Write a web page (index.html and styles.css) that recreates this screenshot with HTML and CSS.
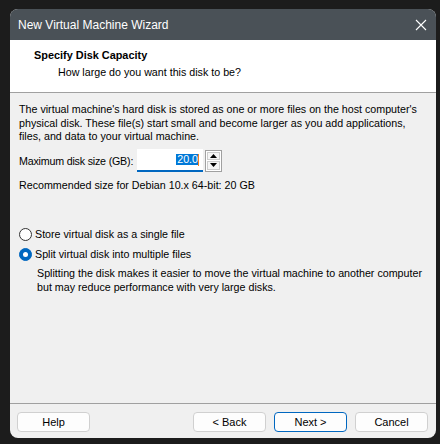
FILE: index.html
```html
<!DOCTYPE html>
<html>
<head>
<meta charset="utf-8">
<link rel="stylesheet" href="styles.css">
</head>
<body>
<div class="window">
  <div class="titlebar">
    <span class="title">New Virtual Machine Wizard</span>
    <svg class="close" width="12" height="12" viewBox="0 0 12 12"><path d="M1 1L11 11M11 1L1 11" stroke="#ffffff" stroke-width="1.1" fill="none"/></svg>
  </div>
  <div class="header">
    <div class="h-title">Specify Disk Capacity</div>
    <div class="h-sub">How large do you want this disk to be?</div>
  </div>
  <div class="content">
    <p class="desc">The virtual machine's hard disk is stored as one or more files on the host computer's<br>physical disk. These file(s) start small and become larger as you add applications,<br>files, and data to your virtual machine.</p>
    <div class="size-row">
      <span class="label">Maximum disk size (GB):</span>
      <div class="input"><span class="sel">20.0</span><span class="caret"></span></div>
      <div class="spin">
        <div class="spin-btn"><svg width="7" height="4" viewBox="0 0 7 4"><path d="M0 4L3.5 0L7 4Z" fill="#000"/></svg></div>
        <div class="spin-btn"><svg width="7" height="4" viewBox="0 0 7 4"><path d="M0 0L3.5 4L7 0Z" fill="#000"/></svg></div>
      </div>
    </div>
    <div class="rec">Recommended size for Debian 10.x 64-bit: 20 GB</div>
    <div class="radios">
      <div class="radio-row"><span class="radio"></span><span>Store virtual disk as a single file</span></div>
      <div class="radio-row"><span class="radio checked"></span><span>Split virtual disk into multiple files</span></div>
      <p class="radio-desc">Splitting the disk makes it easier to move the virtual machine to another computer<br>but may reduce performance with very large disks.</p>
    </div>
  </div>
  <div class="footer">
    <button class="btn">Help</button>
    <div class="spacer"></div>
    <button class="btn">&lt; Back</button>
    <button class="btn primary">Next &gt;</button>
    <button class="btn">Cancel</button>
  </div>
</div>
</body>
</html>
```
FILE: styles.css
```css
* { box-sizing: border-box; }
html, body { margin: 0; padding: 0; }
body {
  background: #1c1c1c;
  width: 440px;
  height: 444px;
  overflow: hidden;
  font-family: "Liberation Sans", Arial, sans-serif;
  font-size: 10.7px;
  color: #000;
  white-space: nowrap;
}
.window {
  margin: 9px 0 0 10px;
  width: 426px;
  height: 429px;
  border-radius: 8px;
  overflow: hidden;
  background: #f0f0f0;
  display: flex;
  flex-direction: column;
}
.titlebar {
  height: 31px;
  background: #4a5157;
  display: flex;
  align-items: center;
  padding: 0 9px 0 8px;
  flex: none;
}
.title {
  color: #ffffff;
  font-size: 12px;
  flex: 1;
}
.close { display: block; }
.header {
  height: 53px;
  background: #ffffff;
  border-bottom: 1px solid #a0a0a0;
  padding: 8px 0 0 24px;
  flex: none;
}
.h-title {
  font-weight: bold;
  font-size: 10.9px;
  line-height: 14px;
}
.h-sub {
  margin-top: 3px;
  padding-left: 24px;
  line-height: 14px;
}
.content {
  flex: 1;
  padding: 10px 9px 0 9px;
}
.desc {
  margin: 0;
  line-height: 13.7px;
}
.size-row {
  display: flex;
  align-items: center;
  margin-top: 5px;
  height: 23px;
}
.label {
  width: 118px;
  flex: none;
  letter-spacing: -0.2px;
}
.input {
  width: 66px;
  height: 23px;
  background: #ffffff;
  border-bottom: 2px solid #0067c0;
  display: flex;
  align-items: center;
  justify-content: flex-end;
  padding-right: 4px;
}
.sel {
  background: #0078d7;
  color: #ffffff;
  line-height: 11px;
  padding: 0 0 0 1px;
}
.caret {
  width: 1px;
  height: 12px;
  background: #f08020;
}
.spin {
  margin-left: 2px;
  width: 17px;
  height: 22px;
  border: 1px solid #a0a0a0;
  background: #ffffff;
  display: flex;
  flex-direction: column;
  padding: 1px;
  gap: 1px;
}
.spin-btn {
  flex: 1;
  border: 1px solid #cccccc;
  background: #f5f5f5;
  display: flex;
  align-items: center;
  justify-content: center;
}
.spin-btn svg { display: block; }
.rec {
  margin-top: 6px;
  line-height: 14px;
}
.radios { margin-top: 34px; }
.radio-row {
  display: flex;
  align-items: center;
  height: 16px;
  margin-bottom: 4px;
}
.radio {
  width: 13px;
  height: 13px;
  border-radius: 50%;
  border: 1px solid #333333;
  background: #ffffff;
  margin-right: 3px;
  flex: none;
  position: relative;
}
.radio.checked {
  background: #0067c0;
  border-color: #0067c0;
}
.radio.checked::after {
  content: "";
  position: absolute;
  left: 3px;
  top: 3px;
  width: 5px;
  height: 5px;
  border-radius: 50%;
  background: #ffffff;
}
.radio-desc {
  margin: 4px 0 0 18px;
  line-height: 14px;
}
.footer {
  height: 35px;
  border-top: 1px solid #a0a0a0;
  display: flex;
  align-items: flex-start;
  padding: 8px 8px 0 7px;
  gap: 8px;
  flex: none;
}
.spacer { flex: 1; }
.btn {
  width: 73px;
  height: 20px;
  border: 1px solid #d0d0d0;
  border-radius: 4px;
  background: #fdfdfd;
  font-family: inherit;
  font-size: 11px;
  color: #000;
  padding: 0;
}
.btn.primary { border-color: #0067c0; }
```
